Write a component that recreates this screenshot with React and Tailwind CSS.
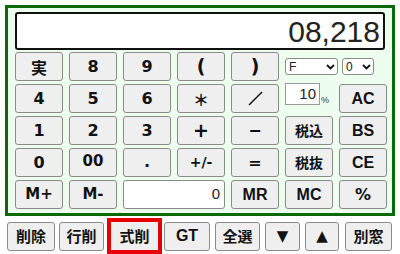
import React from "react";

const keyCls =
  "h-[29px] rounded-[3px] border border-[#8a8a8a] bg-[#efefef] flex items-center justify-center text-[#111] font-bold";
const dv = { fontFamily: '"DejaVu Sans", Verdana, sans-serif' };
const ar = { fontFamily: '"Liberation Sans", Arial, sans-serif' };
const jp = { fontFamily: '"Noto Sans CJK JP", "Noto Sans", sans-serif' };

function Key({ children, font = dv, className = "" }) {
  return (
    <button className={`${keyCls} ${className}`} style={font}>
      {children}
    </button>
  );
}

function Select({ label, className }) {
  return (
    <div
      className={`h-[17px] self-center bg-white border border-[#8a8a8a] rounded-[3px] flex items-center justify-between pl-[3px] pr-[2px] text-[12px] text-[#222] ${className}`}
      style={ar}
    >
      <span>{label}</span>
      <svg width="9" height="6" viewBox="0 0 9 6">
        <path d="M1 1l3.5 3.5L8 1" fill="none" stroke="#111" strokeWidth="1.8" />
      </svg>
    </div>
  );
}

function ToolBtn({ children, w, font = jp, size = "text-[15px]" }) {
  return (
    <button
      className={`h-[29px] ${w} rounded-[3px] border border-[#8a8a8a] bg-[#efefef] flex items-center justify-center ${size} font-bold text-[#111]`}
      style={font}
    >
      {children}
    </button>
  );
}

export default function App() {
  return (
    <div className="w-[400px] h-[254px] bg-white overflow-hidden relative">
      <div className="mt-[5px] ml-[5px] w-[390px] h-[211px] border-[3px] border-[#0a6a0a] bg-[#eefeee] pl-[7px] pt-[4px]">
        <div
          className="w-[370px] h-[38px] bg-white border-2 border-[#111] rounded-[3px] flex items-center justify-end pr-[3px] text-[30px] text-[#222]"
          style={ar}
        >
          08,218
        </div>
        <div className="mt-[2px] grid grid-cols-[repeat(7,48px)] grid-rows-[repeat(5,29px)] gap-x-[6px] gap-y-[3px]">
          <Key font={jp} className="text-[16px]">実</Key>
          <Key className="text-[16px]">8</Key>
          <Key className="text-[16px]">9</Key>
          <Key className="text-[19px]">(</Key>
          <Key className="text-[19px]">)</Key>
          <div className="flex gap-[4px] col-span-2">
            <Select label="F" className="w-[53px]" />
            <Select label="0" className="w-[32px]" />
          </div>

          <Key className="text-[16px]">4</Key>
          <Key className="text-[16px]">5</Key>
          <Key className="text-[16px]">6</Key>
          <Key font={jp} className="text-[16px]">＊</Key>
          <Key>
            <svg width="15" height="15" viewBox="0 0 15 15">
              <path d="M1 14L14 1" stroke="#111" strokeWidth="1.4" />
            </svg>
          </Key>
          <div className="flex items-end">
            <div
              className="w-[35px] h-[22px] bg-white border border-[#999] flex items-center justify-end pr-[3px] text-[15px] text-[#222] -mt-[1px] self-start"
              style={ar}
            >
              10
            </div>
            <span className="text-[9px] text-[#333] ml-[1px] mb-[6px]" style={ar}>%</span>
          </div>
          <Key font={ar} className="text-[16px]">AC</Key>

          <Key className="text-[16px]">1</Key>
          <Key className="text-[16px]">2</Key>
          <Key className="text-[16px]">3</Key>
          <Key className="text-[19px]">+</Key>
          <Key className="text-[16px]">−</Key>
          <Key font={jp} className="text-[14px]">税込</Key>
          <Key font={ar} className="text-[16px]">BS</Key>

          <Key className="text-[16px]">0</Key>
          <Key className="text-[15px] pb-[3px]">00</Key>
          <Key className="text-[16px] items-end pb-[2px]">.</Key>
          <Key className="text-[14px]">+/-</Key>
          <Key className="text-[16px]">=</Key>
          <Key font={jp} className="text-[14px]">税抜</Key>
          <Key font={ar} className="text-[16px]">CE</Key>

          <Key className="text-[15px]">M+</Key>
          <Key className="text-[15px]">M-</Key>
          <div
            className="col-span-2 h-[29px] bg-white border border-[#8a8a8a] rounded-[3px] flex items-center justify-end pr-[4px] text-[15px] text-[#222]"
            style={ar}
          >
            0
          </div>
          <Key font={ar} className="text-[16px]">MR</Key>
          <Key font={ar} className="text-[16px]">MC</Key>
          <Key className="text-[16px]">%</Key>
        </div>
      </div>

      <div className="mt-[2px] ml-[7px] flex items-center h-[36px]">
        <ToolBtn w="w-[48px]">削除</ToolBtn>
        <div className="ml-[4px]"><ToolBtn w="w-[45px]">行削</ToolBtn></div>
        <button
          className="ml-[3px] h-[36px] w-[55px] border-[4px] border-[#e60000] bg-[#efefef] flex items-center justify-center text-[15px] font-bold text-[#111]"
          style={jp}
        >
          式削
        </button>
        <div className="ml-[2px]"><ToolBtn w="w-[46px]" font={ar} size="text-[16px]">GT</ToolBtn></div>
        <div className="ml-[5px]"><ToolBtn w="w-[45px]">全選</ToolBtn></div>
        <div className="ml-[5px]"><ToolBtn w="w-[35px]" font={dv}>▼</ToolBtn></div>
        <div className="ml-[5px]"><ToolBtn w="w-[34px]" font={dv}>▲</ToolBtn></div>
        <div className="ml-[6px]"><ToolBtn w="w-[47px]">別窓</ToolBtn></div>
      </div>
      <div className="ml-[7px] mt-[1px] w-[386px] h-[20px] border border-[#aaa] rounded-[3px] bg-white" />
    </div>
  );
}
